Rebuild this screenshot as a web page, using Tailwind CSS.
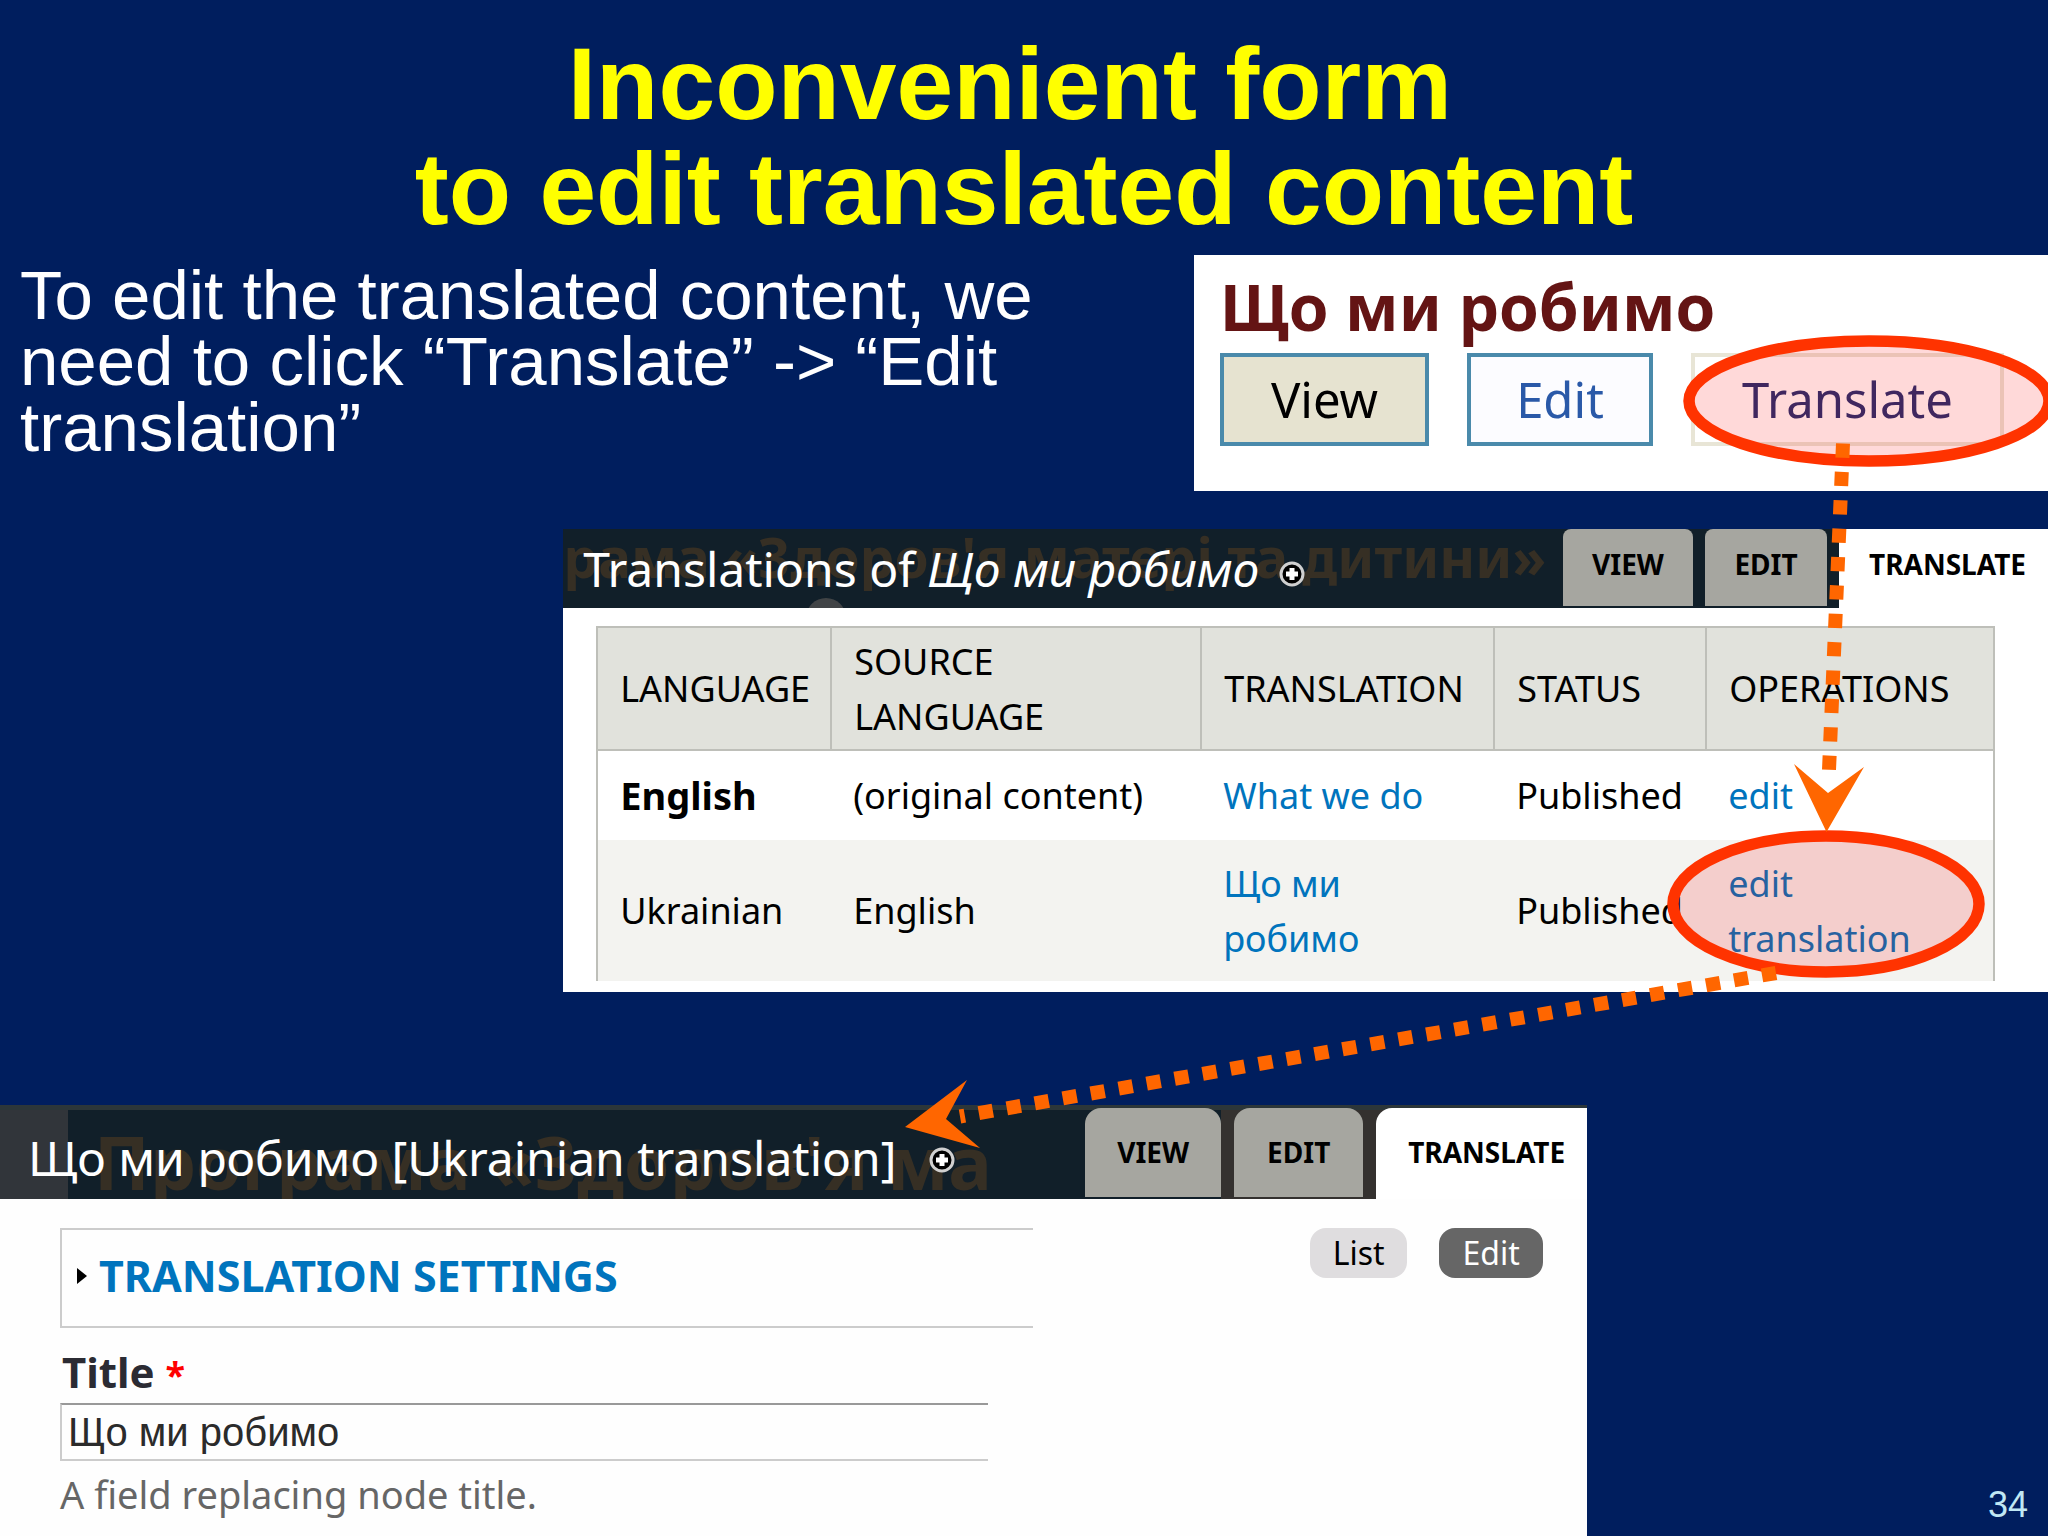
<!DOCTYPE html>
<html lang="en">
<head>
    <meta charset="utf-8">
    <meta name="viewport" content="width=device-width, initial-scale=1">
    <title>Inconvenient form to edit translated content</title>
    <script src="https://cdn.jsdelivr.net/npm/@tailwindcss/browser@4"></script>
</head>
<body class="bg-[#001e5e]">
<main class="relative flex flex-col min-h-screen overflow-hidden font-['Liberation_Sans',Arial,sans-serif]">
    <h1 class="pt-8 text-center text-[102px] leading-[105px] font-bold text-[#ffff00]">
        Inconvenient form&nbsp;<br>to edit translated content
    </h1>

    <div class="flex items-start justify-between mt-[13px]">
        <p class="flex-1 pl-5 pr-20 pt-2 text-[69px] leading-[66px] text-white">
            To edit the translated content, we need to click “Translate” -&gt; “Edit translation”
        </p>

        <!-- Node page on the site -->
        <section class="w-[41.7%] h-[236px] pl-[26px] pt-4 bg-white font-['Noto_Sans',sans-serif]">
            <h2 class="text-[64px] leading-[72px] font-bold text-[#641414]">Що ми робимо</h2>
            <nav class="flex gap-[38px] mt-[10px] text-[49px] leading-[84px] text-center">
                <a href="#" class="w-[209px] h-[93px] border-4 border-[#4a8aab] bg-[#e6e3d0] text-black">View</a>
                <a href="#" class="w-[186px] h-[93px] border-4 border-[#4a8aab] bg-[#fcfcff] text-[#2a59a8]">Edit</a>
                <a href="#" class="w-[313px] h-[93px] border-4 border-[#e8e5d6] text-[#1f2e70]">Translate</a>
            </nav>
        </section>
    </div>

    <!-- Translations overview -->
    <section class="w-[72.5%] ml-auto mt-[38px] pb-[11px] bg-white font-['Noto_Sans',sans-serif] text-black">
        <header class="relative flex items-start justify-between h-[79px] overflow-hidden bg-[#111f29]">
            <div class="absolute left-0 -top-3 text-[55px] leading-[80px] font-bold whitespace-nowrap text-[#362f24]" aria-hidden="true">рама «Здоров'я матері та дитини»</div>
            <div class="absolute left-[243px] top-[69px] w-10 h-10 rounded-full bg-[#414446]"></div>
            <div class="relative flex items-center gap-5 pl-5">
                <h2 class="text-[48px] leading-[79px] text-white">Translations of <em>Що ми робимо</em></h2>
                <svg class="w-[26px] h-[26px] mt-[10px]" viewBox="0 0 26 26">
                    <circle cx="13" cy="13" r="11" fill="#000" stroke="#d0d0d0" stroke-width="3"/>
                    <path d="M13 7v12M7 13h12" stroke="#fff" stroke-width="5"/>
                </svg>
            </div>
            <nav class="relative flex gap-3 text-[28px] leading-[70px] font-bold text-center">
                <a href="#" class="w-[130px] h-[77px] rounded-t-lg bg-[#a6a6a0]">VIEW</a>
                <a href="#" class="w-[122px] h-[77px] rounded-t-lg bg-[#a6a6a0]">EDIT</a>
                <a href="#" class="w-[209px] h-[79px] pl-[30px] text-left bg-white">TRANSLATE</a>
            </nav>
        </header>

        <div class="pl-[33px] pr-[53px] pt-[18px]">
            <table class="w-full border-collapse text-left text-[36px] leading-[55px]">
                <thead>
                    <tr class="h-[123px] bg-[#e1e2dc]">
                        <th class="w-[234px] pl-[22px] font-normal border-2 border-[#bebfb9]">LANGUAGE</th>
                        <th class="w-[370px] pl-[22px] pr-20 font-normal border-2 border-[#bebfb9]">SOURCE LANGUAGE</th>
                        <th class="w-[293px] pl-[22px] font-normal border-2 border-[#bebfb9]">TRANSLATION</th>
                        <th class="w-[212px] pl-[22px] font-normal border-2 border-[#bebfb9]">STATUS</th>
                        <th class="pl-[22px] font-normal border-2 border-[#bebfb9]">OPERATIONS</th>
                    </tr>
                </thead>
                <tbody class="border-x-2 border-[#bebfb9]">
                    <tr class="h-[90px]">
                        <td class="pl-[22px] text-[38px] font-bold">English</td>
                        <td class="pl-[22px]">(original content)</td>
                        <td class="pl-[22px]"><a href="#" class="text-[#0074bd]">What we do</a></td>
                        <td class="pl-[22px]">Published</td>
                        <td class="pl-[22px]"><a href="#" class="text-[#0074bd]">edit</a></td>
                    </tr>
                    <tr class="h-[141px] bg-[#f3f3f0]">
                        <td class="pl-[22px]">Ukrainian</td>
                        <td class="pl-[22px]">English</td>
                        <td class="pl-[22px] pr-24"><a href="#" class="text-[#0074bd]">Що ми робимо</a></td>
                        <td class="pl-[22px]">Published</td>
                        <td class="pl-[22px] pr-20"><a href="#" class="text-[#0074bd]">edit translation</a></td>
                    </tr>
                </tbody>
            </table>
        </div>
    </section>

    <div class="flex items-stretch justify-between flex-1 mt-[113px]">
        <!-- Translation edit form -->
        <section class="w-[77.5%] bg-[#fefefe] font-['Noto_Sans',sans-serif]">
            <header class="relative flex items-end justify-between h-[94px] overflow-hidden bg-[#111f29]">
                <div class="absolute inset-y-0 left-0 w-[68px] bg-[#31353a]"></div>
                <div class="absolute inset-y-0 right-0 w-[366px] bg-[#34312f]"></div>
                <div class="absolute inset-x-0 top-0 h-[5px] bg-[#2c3639]"></div>
                <div class="absolute left-[94px] top-3 text-[73px] leading-[90px] font-bold whitespace-nowrap text-[#362f24]" aria-hidden="true">Програма «Здоров'я ма</div>
                <div class="relative flex items-center gap-8 pl-7">
                    <h2 class="text-[48px] leading-[82px] text-white">Що ми робимо [Ukrainian translation]</h2>
                    <svg class="w-[26px] h-[26px] mt-1" viewBox="0 0 26 26">
                        <circle cx="13" cy="13" r="11" fill="#000" stroke="#d0d0d0" stroke-width="3"/>
                        <path d="M13 7v12M7 13h12" stroke="#fff" stroke-width="5"/>
                    </svg>
                </div>
                <nav class="relative flex gap-[13px] text-[28px] leading-[89px] font-bold text-center text-black">
                    <a href="#" class="w-[136px] h-[89px] rounded-t-2xl bg-[#a6a6a0]">VIEW</a>
                    <a href="#" class="w-[129px] h-[89px] rounded-t-2xl bg-[#a6a6a0]">EDIT</a>
                    <a href="#" class="w-[211px] h-[91px] pl-8 rounded-tl-2xl text-left bg-white">TRANSLATE</a>
                </nav>
            </header>

            <div class="flex items-start justify-between pt-[29px] pl-[60px] pr-[44px]">
                <form class="w-[973px]">
                    <button type="button" class="flex items-center gap-3 w-full h-[100px] pl-[15px] pb-1 border-2 border-r-0 border-[#cccccc] text-[43px] font-bold text-[#0074bd]">
                        <svg class="w-[10px] h-4" viewBox="0 0 10 16"><path d="M0 0l10 8L0 16z" fill="#000"/></svg>
                        TRANSLATION SETTINGS
                    </button>
                    <label for="title" class="block mt-4 pl-[2px] text-[42px] leading-[56px] font-bold text-[#2b2b33]">Title <span class="text-[36px] text-[#ff0000]">*</span></label>
                    <input id="title" type="text" value="Що ми робимо" class="block w-[928px] h-[58px] pl-1.5 border-2 border-r-0 border-t-[#999999] border-l-[#cccccc] border-b-[#cccccc] font-['Liberation_Sans',Arial,sans-serif] text-[40px] text-[#2b2b2b]">
                    <p class="mt-1.5 text-[38px] leading-[54px] text-[#666666]">A field replacing node title.</p>
                </form>
                <nav class="flex gap-8 text-[32px] leading-[50px] text-center">
                    <a href="#" class="w-[97px] h-[50px] rounded-2xl bg-[#dfdddf] text-black">List</a>
                    <a href="#" class="w-[104px] h-[50px] rounded-2xl bg-[#666666] text-white">Edit</a>
                </nav>
            </div>
        </section>

        <p class="self-end pr-5 pb-2 text-[36px] leading-[46px] text-[#c0e8f4]">34</p>
    </div>

    <!-- Callouts drawn over the panels -->
    <svg class="absolute inset-0 w-full h-full pointer-events-none" viewBox="0 0 2048 1536">
        <g fill="#ff0000" fill-opacity="0.15" stroke="#ff3300" stroke-width="11.5">
            <ellipse cx="1869" cy="401" rx="180" ry="60"/>
            <ellipse cx="1826" cy="904" rx="153" ry="68"/>
        </g>
        <g stroke="#ff6600" stroke-width="14" stroke-dasharray="14.2 14.2">
            <path d="M1843 443.500L1829 770"/>
            <path d="M1776 973L960 1116.500"/>
        </g>
        <g fill="#ff6600">
            <path d="M1794 764L1828 793L1864 767L1826.500 832z"/>
            <path d="M967 1080L946 1119L980 1148L905 1127z"/>
        </g>
    </svg>
</main>
</body>
</html>
